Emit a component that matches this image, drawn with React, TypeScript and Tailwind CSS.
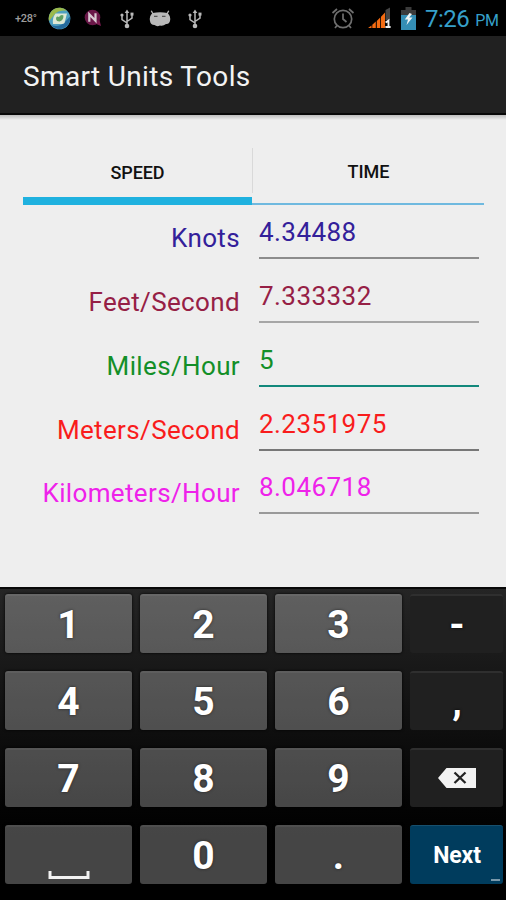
import React from "react";

const rows = [
  { label: "Knots", value: "4.34488", color: "text-[#33209a]", line: "bg-[#8c8c8c]", height: "h-[64px]" },
  { label: "Feet/Second", value: "7.333332", color: "text-[#962045]", line: "bg-[#a6a6a6]", height: "h-[64px]" },
  { label: "Miles/Hour", value: "5", color: "text-[#138f28]", line: "bg-[#12887b]", height: "h-[64px]" },
  { label: "Meters/Second", value: "2.2351975", color: "text-[#f91c1c]", line: "bg-[#777777]", height: "h-[63px]" },
  { label: "Kilometers/Hour", value: "8.046718", color: "text-[#ee22ea]", line: "bg-[#999999]", height: "h-[64px]" },
];

function Usb() {
  return (
    <svg width="14" height="20" viewBox="0 0 14 20" fill="none" stroke="#b9b9b9" strokeWidth="1.5">
      <path d="M7 17V3M7 14L2 10.5V6.5M7 12.5L12 9V5.5" />
      <path d="M4.7 4L7 .5 9.3 4Z" fill="#b9b9b9" stroke="none" />
      <circle cx="7" cy="17" r="2.3" fill="#b9b9b9" stroke="none" />
      <circle cx="2" cy="6" r="1.6" fill="#b9b9b9" stroke="none" />
      <path d="M10.5 3.6h3v3h-3z" fill="#b9b9b9" stroke="none" />
    </svg>
  );
}

function StatusBar() {
  return (
    <header className="flex h-9 items-center bg-black">
      <span className="ml-[15px] w-[22px] text-[11px] font-medium leading-none tracking-[-0.3px] text-[#9c9c9c]">+28°</span>
      <svg className="ml-[11px]" width="23" height="23" viewBox="0 0 23 23">
        <circle cx="11.5" cy="11.5" r="10.8" fill="#4d9fc0" />
        <path d="M1 14A10.8 10.8 0 0 1 19 3.7Q10 3 6 8T1 14Z" fill="#9bb94b" />
        <path d="M3 18Q11 21 17 15T22 9A10.8 10.8 0 0 1 3 18Z" fill="#246a9c" />
        <path d="M7.500 6.500H19L16.500 16Q15.500 17 14 17H5Q4 11 7.500 6.500Z" fill="#dce8d5" />
        <path d="M8 12Q8 8.500 11 10Q13 7 15.500 8.500Q15.500 13.500 11.500 14.500Q8.500 14.500 8 12Z" fill="#5e9f62" />
      </svg>
      <svg className="ml-[13px]" width="18" height="18" viewBox="0 0 18 18">
        <circle cx="8.5" cy="8.5" r="7.8" fill="#6a1748" />
        <path d="M11 14.500L15.500 11L17 17Z" fill="#7c1a50" />
        <path d="M5.300 12.800V5.200L11.500 11.800V4.200" fill="none" stroke="#d8cad2" strokeWidth="2.2" />
      </svg>
      <div className="ml-[18px] flex pt-px"><Usb /></div>
      <svg className="ml-[15px]" width="22" height="17" viewBox="0 0 22 17">
        <path d="M4 4L2.300 .8M18 4L19.700 .8" stroke="#b9b9b9" strokeWidth="1.3" />
        <path d="M3.500 3Q11 1.500 18.500 3Q22 6 21 11Q20 14.500 17 14Q14 16.500 11 15.500Q8 17 5.500 15Q1.500 15 1 11Q0 6 3.500 3Z" fill="#b9b9b9" />
        <path d="M5 6.300h3.500M13 6.300h3.500" stroke="#555" strokeWidth="1.2" />
      </svg>
      <div className="ml-[17px] flex pt-px"><Usb /></div>
      <svg className="ml-[129px]" width="24" height="23" viewBox="0 0 24 23" fill="none" stroke="#6f6f6f" strokeWidth="1.7">
        <circle cx="12" cy="12" r="8.7" />
        <path d="M12 6.500V12L15.500 15M1.500 6L6 2M22.500 6L18 2M6 18.500L4 21M18 18.500L20 21" />
      </svg>
      <svg className="ml-[12px]" width="25" height="22" viewBox="0 0 25 22">
        <path d="M18.500 3L23 .5V13h-4.500Z" fill="#454545" />
        <path d="M1 21L4.500 18.500V21ZM5.300 17.800L8.800 14.500V21H5.300ZM9.800 14L13.200 10.500V21H9.800ZM14 9.800L18 5.500V21H14Z" fill="#f36b12" />
        <path d="M18.600 15.500L21.500 13.600V20M18.400 20h5.200" fill="none" stroke="#eee" strokeWidth="1.9" />
      </svg>
      <svg className="ml-[9px]" width="15" height="23" viewBox="0 0 15 23">
        <path d="M0 3H4.500V0H10.500V3H15V8H0Z" fill="#3b3b3b" />
        <path d="M0 8H15V23H0Z" fill="#348eb4" />
        <path d="M8.500 6L3.800 12.500H7L5.500 18L11.500 10.500H8.200L11 7Z" fill="#f0f4f4" />
      </svg>
      <span className="ml-[9px] pt-px text-[24px] leading-none tracking-[-0.5px] text-[#36a0cb]">7:26</span>
      <span className="ml-[6px] pt-[6px] text-[16px] leading-none tracking-[-0.3px] text-[#36a0cb]">PM</span>
    </header>
  );
}

function Key({ children, dark = false }: { children: React.ReactNode; dark?: boolean }) {
  return (
    <button className={
      dark
        ? "flex h-[59px] items-center justify-center rounded-[3px] border-t-2 border-[#2f2f2f] bg-[#202020] pt-[2px] pl-px text-[39px] font-bold text-white [text-shadow:0_0_3px_#000]"
        : "flex h-[59px] items-center justify-center rounded-[3px] border-t-2 border-white/5 bg-[#ffffff45] pt-[2px] text-[39px] font-bold text-white shadow-[0_0_3px_#000] [text-shadow:0_0_3px_#222]"
    }>{children}</button>
  );
}

export default function App() {
  return (
    <div className="flex h-[900px] w-[506px] flex-col overflow-hidden bg-[#eeeeee] font-['Roboto',sans-serif]">
      <StatusBar />
      <div className="flex h-[79px] items-center border-b-2 border-[#080808] bg-[#212121] pl-[23px] pt-[5px]">
        <h1 className="text-[28px] leading-none tracking-[0.35px] text-[#f3f3f3]">Smart Units Tools</h1>
      </div>
      <div className="h-[5px] bg-gradient-to-b from-[#bdbdbd] to-[#eeeeee]" />
      <main className="flex h-[467px] flex-col pl-[23px] pr-[22px] pt-[23px]">
        <nav className="flex h-[62px] text-[18px] font-medium text-[#111]">
          <div className="flex w-[229px] items-center justify-center border-b-8 border-[#1fb1df] pt-[4px] tracking-[-0.1px]">SPEED</div>
          <div className="flex h-[62px] flex-1 flex-col">
            <div className="mt-[5px] flex h-[45px] items-center justify-center border-l border-[#d9d9d9] pt-[2px]">TIME</div>
            <div className="mt-auto h-[2px] bg-[#6fb9df]" />
          </div>
        </nav>
        <div className="-mt-[8px] flex flex-col">
          {rows.map((r) => (
            <div key={r.label} className={`flex ${r.height} ${r.color} text-[26px] leading-[30px] tracking-[0.36px]`}>
              <div className="w-[217px] pt-[26px] text-right">{r.label}</div>
              <div className="ml-[19px] flex w-[220px] flex-col pt-[20px]">
                <span className="tracking-[0.45px]">{r.value}</span>
                <div className={`mt-[10px] h-[2px] shrink-0 ${r.line}`} />
              </div>
            </div>
          ))}
        </div>
      </main>
      <section className="h-[313px] border-t-2 border-[#080808] bg-gradient-to-b from-[#252525] via-[#080808] via-60% to-black pl-[5px] pr-[3px] pt-[5px]">
        <div className="grid grid-cols-[127px_127px_127px_93px] gap-x-[8px] gap-y-[18px]">
          <Key>1</Key><Key>2</Key><Key>3</Key><Key dark>-</Key>
          <Key>4</Key><Key>5</Key><Key>6</Key><Key dark>,</Key>
          <Key>7</Key><Key>8</Key><Key>9</Key>
          <Key dark>
            <svg className="-mt-[3px]" width="40" height="22" viewBox="0 0 40 22">
              <path d="M1 11L9.500 1H39V21H9.500Z" fill="#f2f2f2" />
              <path d="M17.500 5.500L28.500 16M28.500 5.500L17.500 16" stroke="#222" strokeWidth="2.3" />
            </svg>
          </Key>
          <Key>
            <svg className="mt-[37px]" width="42" height="9" viewBox="0 0 42 9">
              <path d="M2 0V6.500H40V0" fill="none" stroke="#f2f2f2" strokeWidth="3" />
            </svg>
          </Key>
          <Key>0</Key><Key>.</Key>
          <button className="relative flex h-[59px] items-center justify-center rounded-[3px] border-t border-[#17506e] bg-[#003c5d] pl-px pt-[2px] text-[23px] font-bold tracking-[-0.1px] text-white">
            Next
            <span className="absolute bottom-[3px] right-[3px] h-[2px] w-[9px] bg-[#7998aa]" />
          </button>
        </div>
      </section>
    </div>
  );
}
